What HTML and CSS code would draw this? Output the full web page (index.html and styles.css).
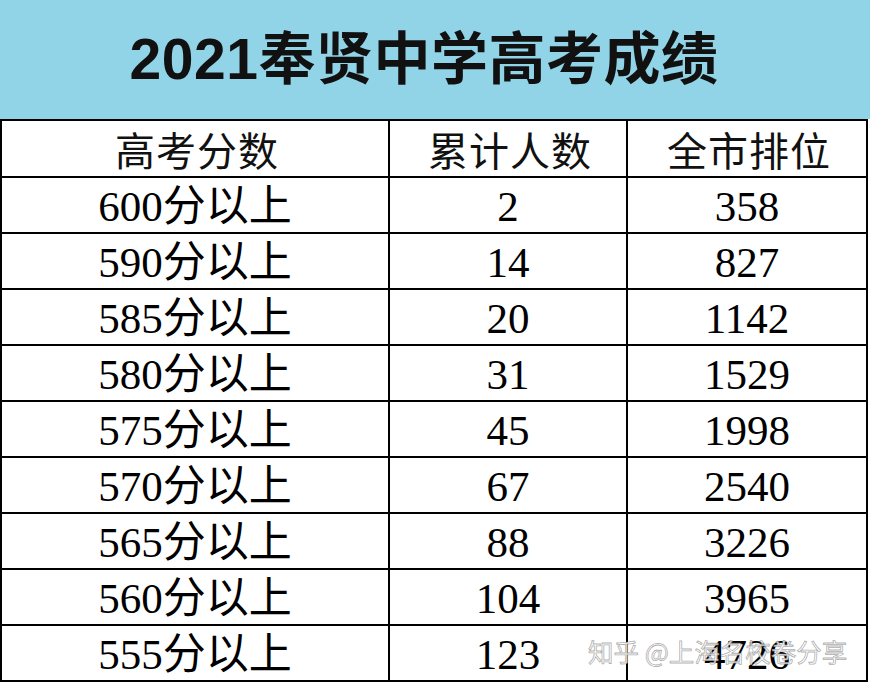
FILE: index.html
```html
<!DOCTYPE html>
<html lang="zh-CN">
<head>
<meta charset="utf-8">
<title>2021奉贤中学高考成绩</title>
<link rel="stylesheet" href="styles.css">
</head>
<body>
<div class="page">
  <header class="banner"><h1 class="title">2021奉贤中学高考成绩</h1></header>
  <div class="grid">
    <div class="cell head">高考分数</div><div class="cell head">累计人数</div><div class="cell head">全市排位</div>
    <div class="cell">600分以上</div><div class="cell">2</div><div class="cell">358</div>
    <div class="cell">590分以上</div><div class="cell">14</div><div class="cell">827</div>
    <div class="cell">585分以上</div><div class="cell">20</div><div class="cell">1142</div>
    <div class="cell">580分以上</div><div class="cell">31</div><div class="cell">1529</div>
    <div class="cell">575分以上</div><div class="cell">45</div><div class="cell">1998</div>
    <div class="cell">570分以上</div><div class="cell">67</div><div class="cell">2540</div>
    <div class="cell">565分以上</div><div class="cell">88</div><div class="cell">3226</div>
    <div class="cell">560分以上</div><div class="cell">104</div><div class="cell">3965</div>
    <div class="cell">555分以上</div><div class="cell">123</div><div class="cell">4726</div>
  </div>
  <div class="watermark">知乎 @上海名校卷分享</div>
</div>
</body>
</html>
```

FILE: styles.css
```css
html, body {
  margin: 0;
  padding: 0;
  background: #ffffff;
}
.page {
  position: relative;
  width: 870px;
  height: 688px;
  overflow: hidden;
}
.banner {
  height: 119px;
  background: #91d4e7;
  display: flex;
  align-items: center;
  justify-content: center;
}
.title {
  margin: 0;
  padding-right: 22px;
  font-family: "Liberation Sans", "Noto Sans CJK SC", sans-serif;
  font-weight: bold;
  font-size: 57px;
  line-height: 1;
  color: #111;
  letter-spacing: 0.5px;
}
.grid {
  width: 866px;
  display: grid;
  grid-template-columns: 388px 238px 240px;
  grid-template-rows: 57px repeat(9, 56px);
  border-top: 2px solid #000;
  border-left: 2px solid #000;
}
.cell {
  box-sizing: border-box;
  border-right: 2px solid #000;
  border-bottom: 2px solid #000;
  display: flex;
  align-items: center;
  justify-content: center;
  font-family: "Liberation Serif", "Noto Sans CJK SC", serif;
  font-size: 43px;
  line-height: 1;
  color: #000;
  padding-top: 2px;
}
.cell.head {
  font-family: "Noto Sans CJK SC", sans-serif;
  font-size: 40px;
  color: #111;
  letter-spacing: 1px;
  padding-top: 0;
  padding-left: 4px;
}
.watermark {
  position: absolute;
  left: 588px;
  top: 637px;
  font-family: "Noto Sans CJK SC", sans-serif;
  font-size: 25.5px;
  line-height: 1.1;
  color: rgba(255, 255, 255, 0.85);
  -webkit-text-stroke: 0.8px rgba(130, 130, 130, 0.65);
  white-space: nowrap;
}
```
